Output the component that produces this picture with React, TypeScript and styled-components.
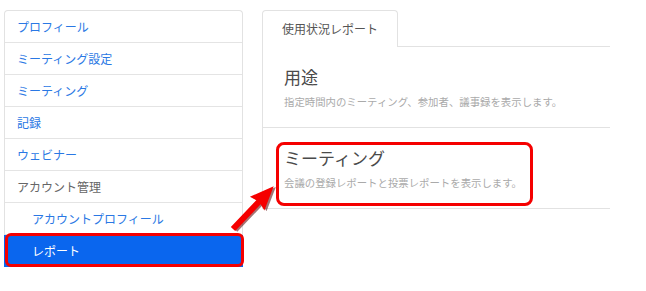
import React from "react";
import styled, { createGlobalStyle } from "styled-components";

const Global = createGlobalStyle`
  html, body { margin: 0; padding: 0; background: #fff; }
  body { font-family: "Noto Sans CJK JP", "Noto Sans", sans-serif; }
`;

const Page = styled.div`
  position: relative;
  width: 646px;
  height: 291px;
  display: flex;
  align-items: flex-start;
  gap: 19px;
  padding: 10px 0 0 4px;
  box-sizing: border-box;
`;

const Sidebar = styled.ul`
  list-style: none;
  margin: 0;
  padding: 0;
  width: 239px;
  border: 1px solid #e2e2e2;
  border-bottom: none;
  border-radius: 4px 4px 0 0;
  box-sizing: border-box;
`;

const Item = styled.li<{ $indent?: boolean; $kind?: "link" | "label" | "active" }>`
  position: relative;
  height: 31px;
  display: flex;
  align-items: center;
  border-bottom: 1px solid #e4e4e4;
  font-size: 12px;
  color: ${(p) => (p.$kind === "label" ? "#666" : p.$kind === "active" ? "#fff" : "#2a78e4")};
  background: ${(p) => (p.$kind === "active" ? "#0a66ee" : "transparent")};
  margin: ${(p) => (p.$kind === "active" ? "0 -1px" : "0")};
  border-color: ${(p) => (p.$kind === "active" ? "#0a66ee" : "#e4e4e4")};
  padding-left: ${(p) => (p.$kind === "active" ? 28 : p.$indent ? 27 : 12)}px;
`;

const Highlight = styled.div<{ $radius: number }>`
  position: absolute;
  border: 3px solid #f50000;
  border-radius: ${(p) => p.$radius}px;
  box-sizing: border-box;
  pointer-events: none;
`;

const Main = styled.div`
  width: 348px;
  display: flex;
  flex-direction: column;
`;

const TabBar = styled.div`
  display: flex;
  align-items: stretch;
  height: 37px;
`;

const Tab = styled.div`
  width: 136px;
  box-sizing: border-box;
  border: 1px solid #e2e2e2;
  border-bottom: none;
  border-radius: 4px 4px 0 0;
  display: flex;
  align-items: center;
  justify-content: center;
  font-size: 12px;
  color: #555;
  padding-bottom: 1px;
`;

const TabFiller = styled.div`
  flex: 1;
  border-bottom: 1px solid #e2e2e2;
`;

const Panel = styled.div`
  border-left: 1px solid #e2e2e2;
`;

const Section = styled.div`
  position: relative;
  height: 80px;
  border-bottom: 1px solid #e2e2e2;
  display: flex;
  flex-direction: column;
  justify-content: center;
  gap: 6px;
  padding-left: 21px;
`;

const Title = styled.div`
  font-size: 17px;
  line-height: 24px;
  color: #4a4a4a;
`;

const Desc = styled.div`
  font-size: 10.4px;
  line-height: 14px;
  color: #aaa;
`;

const ArrowSvg = styled.svg`
  position: absolute;
  left: 0;
  top: 0;
  pointer-events: none;
`;

const arrowPts = "0,-3 37,-3 35,-10 59,0 35,10 37,3 0,3";

const Arrow = () => (
  <ArrowSvg width={646} height={291}>
    <g transform="translate(233,229) rotate(-46.4)">
      <polygon points={arrowPts} fill="#5a0000" opacity={0.55} transform="translate(1,2)" />
      <polygon points={arrowPts} fill="#f50000" />
    </g>
  </ArrowSvg>
);

export default function App() {
  return (
    <>
      <Global />
      <Page>
        <Sidebar>
          <Item>プロフィール</Item>
          <Item>ミーティング設定</Item>
          <Item>ミーティング</Item>
          <Item>記録</Item>
          <Item>ウェビナー</Item>
          <Item $kind="label">アカウント管理</Item>
          <Item $indent>アカウントプロフィール</Item>
          <Item $kind="active">
            レポート
            <Highlight $radius={6} style={{ left: 1, right: -1, top: -2, bottom: -1 }} />
          </Item>
        </Sidebar>
        <Main>
          <TabBar>
            <Tab>使用状況レポート</Tab>
            <TabFiller />
          </TabBar>
          <Panel>
            <Section>
              <Title>用途</Title>
              <Desc>指定時間内のミーティング、参加者、議事録を表示します。</Desc>
            </Section>
            <Section>
              <Title>ミーティング</Title>
              <Desc>会議の登録レポートと投票レポートを表示します。</Desc>
              <Highlight $radius={8} style={{ left: 13, top: 14, width: 257, height: 64 }} />
            </Section>
          </Panel>
        </Main>
        <Arrow />
      </Page>
    </>
  );
}
